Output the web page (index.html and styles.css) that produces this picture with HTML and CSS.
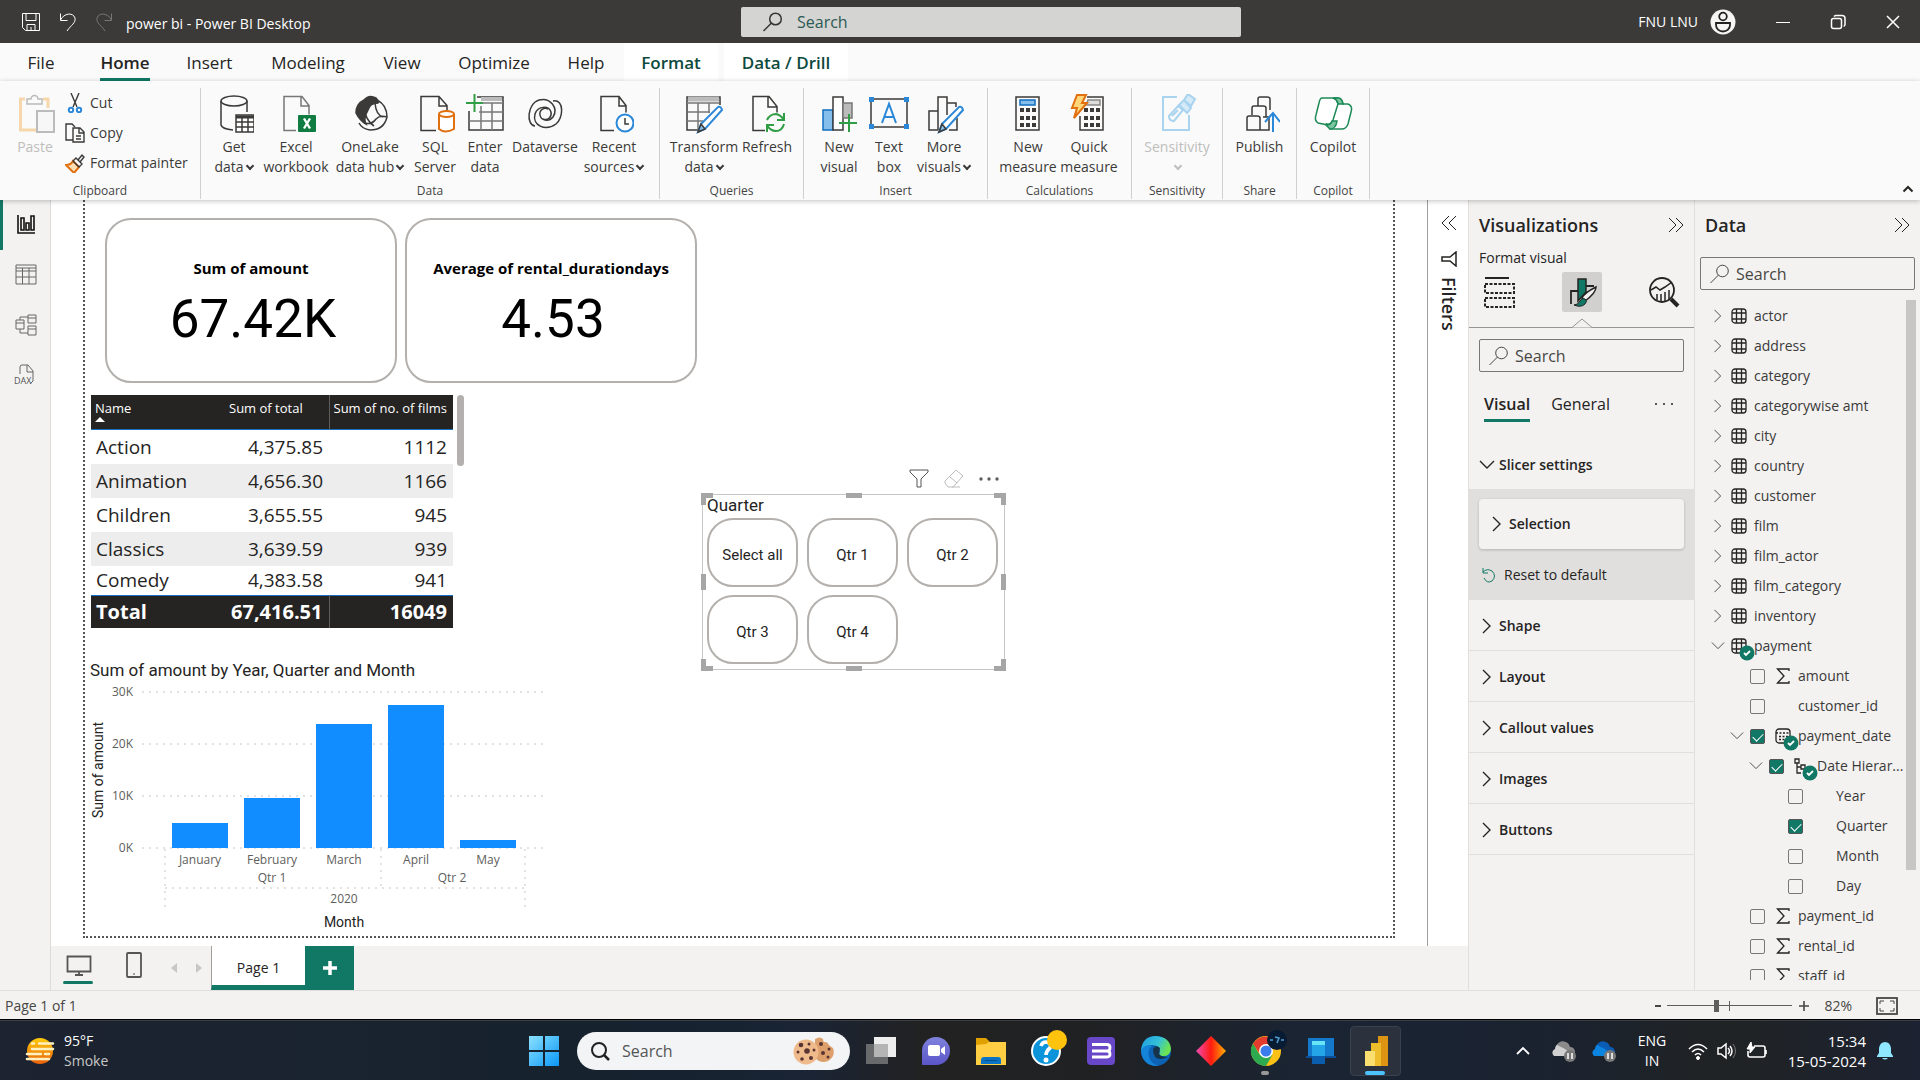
FILE: index.html
```html
<!DOCTYPE html>
<html lang="en">
<head>
<meta charset="utf-8">
<title>power bi - Power BI Desktop</title>
<link rel="stylesheet" href="styles.css">
</head>
<body>
<svg class="defs" aria-hidden="true">
  <symbol id="search" viewBox="0 0 20 20"><circle cx="12.500" cy="7" r="5.800"/><path d="M8.500 11 .5 19"/></symbol>
  <symbol id="right" viewBox="0 0 16 16"><path d="M4 1l7 7-7 7"/></symbol>
  <symbol id="down" viewBox="0 0 16 16"><path d="M1 4l7 7 7-7"/></symbol>
  <symbol id="double" viewBox="0 0 16 16"><path d="M1 1l7 7-7 7M8 1l7 7-7 7"/></symbol>
  <symbol id="table" viewBox="0 0 16 16"><rect x="1" y="1" width="14" height="14" rx="3"/><path d="M1 5h14M1 11h14M5.500 1v14M10.500 1v14"/></symbol>
  <symbol id="sigma" viewBox="0 0 14 16"><path d="M13 3V1H1.500L8 8l-6.500 7H13v-2"/></symbol>
  <symbol id="badge" viewBox="0 0 16 16"><circle cx="8" cy="8" r="7.500" fill="#117865" stroke="none"/><path d="M5 8l2 2 4-4" stroke="#fff" stroke-width="1.800"/></symbol>
  <symbol id="cloud" viewBox="0 0 34 30"><path d="M7 13a6 6 0 0 1 11-3l3 10H6a4 4 0 0 1 1-7z" fill="var(--a)"/><path d="M9 9a7 7 0 0 1 13 2 5 5 0 0 1 3 9l-8-7z" fill="var(--b)"/><circle cx="22" cy="20" r="6" fill="#777"/><path d="M20 17v6M24 17v6" stroke="#fff" stroke-width="1.500"/></symbol>
</svg>

<header class="titlebar">
  <div class="title-left">
    <button class="plain" aria-label="Save"><svg width="20" height="20" viewBox="0 0 20 20"><path d="M1.500 1.500h17v17h-14l-3-3zM5 1.500v7h10v-7M6 18.500v-6h8v6M10 15v3"/></svg></button>
    <button class="plain" aria-label="Undo"><svg width="18" height="20" viewBox="0 0 18 20"><path d="M1.500 1.500v7h7M1.500 8C5 1 14 0 16 6c1 5-4 7-8 13"/></svg></button>
    <button class="plain dim" aria-label="Redo"><svg width="18" height="20" viewBox="0 0 18 20"><path d="M16.500 1.500v7h-7M16.500 8C13 1 4 0 2 6c-1 5 4 7 8 13"/></svg></button>
    <span class="doc">power bi - Power BI Desktop</span>
  </div>
  <label class="title-search"><svg width="20" height="20"><use href="#search"/></svg><input type="text" placeholder="Search" aria-label="Search"></label>
  <div class="title-right">
    <span>FNU LNU</span>
    <svg class="avatar" width="26" height="26" viewBox="0 0 26 26"><circle cx="13" cy="13" r="12.500" fill="#f6f5f4" stroke="none"/><g stroke="#222" stroke-width="1.800"><circle cx="13" cy="7.500" r="3.800"/><path d="M6 14h14v2a7 6.500 0 0 1-14 0z"/></g></svg>
    <button class="plain win" aria-label="Minimize"><svg width="16" height="16" viewBox="0 0 16 16"><path d="M1 8.500h14"/></svg></button>
    <button class="plain win" aria-label="Restore"><svg width="16" height="16" viewBox="0 0 16 16"><rect x="1.500" y="4.500" width="10" height="10" rx="2" stroke-width="1.500"/><path d="M4 2.500q1-1 2-1h6q3 0 3 3v6l-1 2" stroke-width="1.500"/></svg></button>
    <button class="plain win" aria-label="Close"><svg width="16" height="16" viewBox="0 0 16 16"><path d="M2 2l12 12M14 2L2 14" stroke-width="1.500"/></svg></button>
  </div>
</header>

<nav class="tabs">
  <button class="w72"><span>File</span></button>
  <button class="w96 active"><span>Home</span></button>
  <button class="w73"><span>Insert</span></button>
  <button class="w124"><span>Modeling</span></button>
  <button class="w64"><span>View</span></button>
  <button class="w120"><span>Optimize</span></button>
  <button class="w64"><span>Help</span></button>
  <button class="w94 context"><span>Format</span></button>
  <button class="w124 context"><span>Data / Drill</span></button>
</nav>

<section class="ribbon">
  <div class="group clip">
    <div class="tools">
      <button class="tool w50 off"><svg viewBox="-4 0 40 40"><path d="M6 5H1.500v31H18M24 5h5v9" stroke="#f6d7ab" stroke-width="3"/><path d="M8 10V5h4a3.500 3.500 0 0 1 7 0h4v5z" fill="#fafafa" stroke="#bbb"/><rect x="18" y="17" width="17" height="21" fill="#f7f7f7" stroke="#bbb" stroke-width="2"/></svg>Paste</button>
      <div class="minis">
        <button><svg viewBox="0 0 20 20"><path d="M6 0l6 14M14 0L8 14"/><g stroke="#2b88d8" stroke-width="2"><circle cx="6" cy="17" r="2.200"/><circle cx="14" cy="17" r="2.200"/></g></svg>Cut</button>
        <button><svg viewBox="0 0 20 20"><path d="M8 17H1V1h6l3 3"/><path d="M8 5h7l4 4v10H8zM14 5v5h5M11 13h5M11 16h5"/></svg>Copy</button>
        <button><svg viewBox="0 0 20 20"><path d="M1 12c4 0 6-2 7-4l6 6-5 6z" fill="#fbe0b5" stroke="#e07010" stroke-width="2"/><path d="M8 8l3-3 6 6-3 3zM13 7l4-5 2 2-4 5"/></svg>Format painter</button>
      </div>
    </div>
    <h2>Clipboard</h2>
  </div>
  <div class="group data">
    <div class="tools">
      <button class="tool w50"><svg viewBox="0 0 40 40"><ellipse cx="20" cy="7" rx="13" ry="5"/><path d="M7 7v24q1 4 12 5M33 7v11"/><rect x="22" y="21" width="18" height="17" fill="#fff"/><path d="M22 23h18" stroke-width="3"/><path d="M22 28h18M22 33h18M28 24v14M34 24v14"/></svg>Get<br>data<i></i></button>
      <button class="tool w74"><svg viewBox="0 0 40 40"><path d="M20 36.500H8V2.500h18l7 9v9M25 3v9h8" stroke="#777"/><rect x="22" y="21" width="18" height="17" rx="1" fill="#107c41" stroke="none"/><path d="M28 24.500l6 10M34 24.500l-6 10" stroke="#fff" stroke-width="2.400"/></svg>Excel<br>workbook</button>
      <button class="tool w74"><svg viewBox="0 0 40 40"><path d="M14 6q5-6 12-2 3 3 2 5-8 0-10 7-5 8-2 14-6-3-10-11 0-9 8-13z" fill="#3b3a39"/><path d="M27 6q10 5 10 17-3 13-17 13-8-1-11-7M13 12q3 15 11 20M25 9q1 12 8 14M14 29q8 2 12-4 4-4 11-2"/></svg>OneLake<br>data hub<i></i></button>
      <button class="tool w56"><svg viewBox="0 0 40 40"><path d="M21 36.500H6V2.500h18l8 9v5M24 3v9h8"/><g stroke="#e07010" stroke-width="2" fill="#fff"><path d="M24 20v15q6 5 15 0V20"/><ellipse cx="31.500" cy="20" rx="7.500" ry="3"/></g></svg>SQL<br>Server</button>
      <button class="tool w44"><svg viewBox="0 0 40 40"><path d="M12 3h26v33H4V17"/><path d="M16 5h21" stroke="#bbb" stroke-width="4"/><path d="M14 9h24M14 18h24M4 27h34M16 12v24M27 9v27" stroke="#777"/><path d="M9.500 0v18M1 9h17" stroke="#2f9e44" stroke-width="2"/></svg>Enter<br>data</button>
      <button class="tool w76"><svg viewBox="0 0 40 40"><path d="M10 32c-9-1-8-22 4-26 11-3 20 8 14 17-4 5-12 4-13-2-1-5 4-8 8-6"/><path d="M28 7c12-2 10 18 3 23-11 8-24 1-21-10 3-9 14-8 16-2 1 5-3 9-8 7"/></svg>Dataverse</button>
      <button class="tool w62"><svg viewBox="0 0 40 40"><path d="M20 36.500H7V2.500h18l7 9v7M25 3v9h7"/><circle cx="31" cy="29" r="8.500" fill="#fff" stroke="#2b88d8" stroke-width="2"/><path d="M31 24v6h4"/></svg>Recent<br>sources<i></i></button>
    </div>
    <h2>Data</h2>
  </div>
  <div class="group queries">
    <div class="tools">
      <button class="tool w72"><svg viewBox="0 0 40 40"><path d="M16 36H3V3h33v8"/><path d="M4 5h31" stroke="#bbb" stroke-width="5"/><path d="M3 9h32M3 18h23M3 27h16M14 9v27M25 9v10" stroke="#777"/><path d="M14 38l3-8 17-17q3-1 4 3L21 35z" fill="#fff" stroke="#2b88d8" stroke-width="2"/><path d="M14 38l3-8 4 5z" fill="#83beec"/></svg>Transform<br>data<i></i></button>
      <button class="tool w54"><svg viewBox="0 0 40 40"><path d="M18 36.500H6V2.500h16l8 10v6M21 3v10h9"/><path d="M37 19v7h-7M20 26q3-6 9-6 5 1 8 6M20 38v-7h7M37 30q-2 7-8 7-6 0-9-6" stroke="#2f9e44" stroke-width="2"/></svg>Refresh</button>
    </div>
    <h2>Queries</h2>
  </div>
  <div class="group insert">
    <div class="tools">
      <button class="tool w50"><svg viewBox="0 0 40 40"><rect x="4" y="16" width="10" height="20" fill="#83beec" stroke="#106ebe"/><rect x="14" y="3" width="10" height="33" fill="#fff"/><path d="M24 9h9v15H24z" fill="#bbb" stroke="#777"/><path d="M30 20v18M20 29h18" stroke="#2f9e44" stroke-width="2"/></svg>New<br>visual</button>
      <button class="tool w50"><svg viewBox="0 0 40 40"><rect x="2" y="5" width="36" height="28"/><path d="M13 29l7-19 7 19M15 23h10" stroke="#2b88d8" stroke-width="2"/><g fill="#2b88d8" stroke="none"><path d="M0 3h5v5H0zM35 3h5v5h-5zM0 30h5v5H0zM35 30h5v5h-5z"/></g></svg>Text<br>box</button>
      <button class="tool w60"><svg viewBox="0 0 40 40"><path d="M14 36H5V17h9M14 36V3h9v18M23 9h9v4M33 24v12h-8"/><path d="M15 38l3-8 17-17q3-1 4 3L22 35z" fill="#fff" stroke="#2b88d8" stroke-width="2"/><path d="M15 38l3-8 4 5z" fill="#83beec"/></svg>More<br>visuals<i></i></button>
    </div>
    <h2>Insert</h2>
  </div>
  <div class="group insert">
    <div class="tools">
      <button class="tool w60"><svg viewBox="0 0 40 40"><rect x="8" y="3" width="23" height="33"/><rect x="12" y="6" width="15" height="5" fill="#83beec" stroke="#106ebe"/><path d="M12 16h17M12 24h17M12 31h17" stroke-width="4" stroke-dasharray="4 2"/></svg>New<br>measure</button>
      <button class="tool w62"><svg viewBox="0 0 40 40"><path d="M18 3h16v33H11V22"/><path d="M19 6h12v5H17z" fill="#ddd" stroke="#888"/><path d="M15 16h17M15 24h17M15 31h17" stroke-width="4" stroke-dasharray="4 2"/><path d="M8 1h9l-4 8h5L5 24l3-10H3z" fill="#ffd77a" stroke="#e07010" stroke-width="2"/></svg>Quick<br>measure</button>
    </div>
    <h2>Calculations</h2>
  </div>
  <div class="group w91">
    <div class="tools center">
      <button class="tool w76 off"><svg viewBox="0 0 40 40"><g stroke="#a9d3ee" stroke-width="2"><path d="M20 3H6v33h26V21"/><path d="M12 22l9-10 5 4-9 11q-5 0-5-5zM15 22l6-6"/><path d="M22 11l8 8 4-5-7-8zM27 6l4-6 7 5-4 7z" fill="#d4eaf8"/></g></svg>Sensitivity<br><i></i></button>
    </div>
    <h2>Sensitivity</h2>
  </div>
  <div class="group w74">
    <div class="tools center">
      <button class="tool w62"><svg viewBox="0 0 40 40"><path d="M20 36H7V24q0-2 2-2h8q3 0 3 2zM12 21v-7q0-2 2-2h9q3 0 3 2v9M18 12V5q0-2 2-2h7q3 0 3 2v11M20 36h9V23h-6"/><path d="M33 38V19M25 28l8-9 7 9" stroke="#2b88d8" stroke-width="2"/></svg>Publish</button>
    </div>
    <h2>Share</h2>
  </div>
  <div class="group w73">
    <div class="tools center">
      <button class="tool w62"><svg viewBox="0 0 40 40"><g stroke="#1d8a57" fill="#fff"><path d="M9 4h14q5 1 4 8l-5 17q-2 4-7 2l-10-2q-4-3-2-8l3-12q1-5 3-5z"/><path d="M20 4h5q4 0 5 6h5q5 2 3 8l-3 12q-2 5-6 5H17l-3-5q4 1 6-4l5-16q-1-5-5-6z"/><path d="M20 4h5q4 0 5 6h-5q-1-5-5-6zM13 31q5 0 6-4h5q-1 8-7 8z" fill="#7cc5a0"/></g></svg>Copilot</button>
    </div>
    <h2>Copilot</h2>
  </div>
  <button class="collapse plain" aria-label="Collapse ribbon"><svg width="12" height="12" viewBox="0 0 12 12"><path d="M1.500 8.500L6 4l4.500 4.500" stroke-width="2"/></svg></button>
</section>

<main class="main">
  <nav class="rail">
    <button class="on" aria-label="Report view"><svg viewBox="0 0 22 22"><path d="M3 1v18h17M6 16V4h3v12zM11 16V9h3v7zM16 16V2h3v14z" stroke-width="1.600"/></svg></button>
    <button aria-label="Table view"><svg viewBox="0 0 22 22"><path d="M1 1h20v19H1zM1 7h20M1 13h20M7.500 4v16M14 4v16M1 4h20"/></svg></button>
    <button aria-label="Model view"><svg viewBox="0 0 22 22"><path d="M1 6h8v9H1zM1 9h8M13 1h8v8h-8zM13 4h8M13 12h8v9h-8zM13 15h8M5 6V3h8M5 15v4h8"/></svg></button>
    <button aria-label="DAX query view"><svg viewBox="0 0 22 22"><path d="M5 10V3q0-2 2-2h6l5 6v10l-3 3M12 1v7h6"/><text x="-1" y="20">DAX</text></svg></button>
  </nav>

  <div class="center-col">
    <div class="work">
      <div class="canvas">
        <div class="report">
          <article class="card c1"><h3>Sum of amount</h3><p>67.42K</p></article>
          <article class="card c2"><h3>Average of rental_durationdays</h3><p>4.53</p></article>

          <div class="matrix">
            <table>
              <thead><tr><th>Name<b></b></th><th>Sum of total</th><th>Sum of no. of films</th></tr></thead>
              <tbody>
                <tr><td>Action</td><td>4,375.85</td><td>1112</td></tr>
                <tr><td>Animation</td><td>4,656.30</td><td>1166</td></tr>
                <tr><td>Children</td><td>3,655.55</td><td>945</td></tr>
                <tr><td>Classics</td><td>3,639.59</td><td>939</td></tr>
                <tr class="cut"><td>Comedy</td><td>4,383.58</td><td>941</td></tr>
              </tbody>
              <tfoot><tr><td>Total</td><td>67,416.51</td><td>16049</td></tr></tfoot>
            </table>
            <div class="matrix-bar"></div>
          </div>

          <figure class="chart">
            <figcaption>Sum of amount by Year, Quarter and Month</figcaption>
            <svg width="460" height="250" viewBox="0 0 460 250">
              <g class="grid"><path d="M52 12h402M52 64h402M52 116h402M52 168h402M75 169v61M291 169v39M435 169v61M75 208h360"/></g>
              <g fill="#118dff" stroke="none"><path d="M82 143h56v25H82zM154 118h56v50h-56zM226 44h56v124h-56zM298 25h56v143h-56zM370 160h56v8h-56z"/></g>
              <g class="axis" text-anchor="end"><text x="43" y="16">30K</text><text x="43" y="68">20K</text><text x="43" y="120">10K</text><text x="43" y="172">0K</text></g>
              <g class="axis" text-anchor="middle"><text x="110" y="184">January</text><text x="182" y="184">February</text><text x="254" y="184">March</text><text x="326" y="184">April</text><text x="398" y="184">May</text><text x="182" y="202">Qtr 1</text><text x="362" y="202">Qtr 2</text><text x="254" y="223">2020</text></g>
              <g class="axis-title" text-anchor="middle"><text x="254" y="247">Month</text><text transform="translate(13 90) rotate(-90)">Sum of amount</text></g>
            </svg>
          </figure>

          <section class="slicer">
            <div class="slicer-tools">
              <svg width="20" height="20" viewBox="0 0 20 20"><path d="M1 1h18v2l-7 7v8H8v-8L1 3z" stroke="#555"/></svg>
              <svg width="20" height="20" viewBox="0 0 20 20"><path d="M1 12L12 1l7 6-10 11H4l-3-4zM6 8l7 6M8 18h8" stroke="#bbb"/></svg>
              <svg width="20" height="20" viewBox="0 0 20 20"><g fill="#605e5c" stroke="none"><circle cx="2" cy="10" r="1.700"/><circle cx="10" cy="10" r="1.700"/><circle cx="18" cy="10" r="1.700"/></g></svg>
            </div>
            <h3>Quarter</h3>
            <div class="tiles"><button>Select all</button><button>Qtr 1</button><button>Qtr 2</button><button>Qtr 3</button><button>Qtr 4</button></div>
            <i class="h tl"></i><i class="h tr"></i><i class="h bl"></i><i class="h br"></i>
            <i class="m top"></i><i class="m bottom"></i><i class="m left"></i><i class="m right"></i>
          </section>
        </div>
      </div>
      <aside class="filters">
        <button class="plain flip" aria-label="Expand filters"><svg width="16" height="16"><use href="#double"/></svg></button>
        <svg width="16" height="16" viewBox="0 0 16 16"><path d="M15 1v14L9 10H1V6h8z" stroke-width="1.500"/></svg>
        <span>Filters</span>
      </aside>
    </div>
    <div class="pages">
      <button class="view on" aria-label="Desktop layout"><svg width="26" height="24" viewBox="0 0 26 24"><path d="M1.500 3.500h23v15h-23zM13 19v3M9 22h8" stroke-width="1.800"/></svg></button>
      <button class="view" aria-label="Mobile layout"><svg width="18" height="28" viewBox="0 0 18 28"><rect x="2" y="2" width="14" height="24" rx="1" stroke-width="1.800"/><path d="M8 23h2"/></svg></button>
      <button class="arrow" aria-label="Previous page"><svg width="8" height="12"><path d="M7 1v10L1 6z"/></svg></button>
      <button class="arrow" aria-label="Next page"><svg width="8" height="12"><path d="M1 1v10l6-5z"/></svg></button>
      <button class="page">Page 1</button>
      <button class="add" aria-label="New page"><svg width="16" height="16" viewBox="0 0 16 16"><path d="M8 1v14M1 8h14" stroke="#fff" stroke-width="3.500"/></svg></button>
    </div>
  </div>

  <aside class="pane viz">
    <div class="pane-head"><h2>Visualizations</h2><button class="plain" aria-label="Collapse"><svg width="16" height="16"><use href="#double"/></svg></button></div>
    <p class="sub">Format visual</p>
    <div class="modes">
      <button aria-label="Build visual"><svg width="32" height="32" viewBox="0 0 32 32"><path d="M2 2h24" stroke-width="2"/><path d="M2 8h29v9H2zM2 22h29v9H2z" stroke-width="2" stroke-dasharray="3 1.500"/></svg></button>
      <button class="on" aria-label="Format visual"><svg width="32" height="32" viewBox="0 0 32 32"><path d="M5 28V15h7M20 10h8" stroke-width="1.800"/><path d="M12 3h8v13l-8 9z" fill="#117865" stroke-width="1.500"/><path d="M16 22q2-5 14-11 0 6-11 14z" fill="#f3f2f1" stroke-width="1.500"/><path d="M8 29q4 0 6-4 2-4 5-2 3 2 0 5-4 4-11 1z" fill="#117865"/></svg></button>
      <button aria-label="Analytics"><svg width="32" height="32" viewBox="0 0 32 32"><circle cx="14" cy="14" r="12" stroke-width="1.800"/><path d="M3 14l5-3 4 3 5-3 7-5M9 24v-6M13 26v-8M17 25v-9M21 23v-9" stroke-width="1.500"/><path d="M23 23l7 7" stroke-width="4"/></svg></button>
    </div>
    <svg class="notch" width="20" height="10" viewBox="0 0 20 10"><path d="M0 9.500L10 1l10 8.500" fill="#f3f2f1" stroke="#979593"/></svg>
    <label class="find"><svg width="20" height="20"><use href="#search"/></svg><input type="text" placeholder="Search" aria-label="Search format options"></label>
    <div class="subtabs"><button class="on">Visual</button><button>General</button><button class="dots" aria-label="More options"><svg width="20" height="4"><g fill="#252423" stroke="none"><circle cx="2" cy="2" r="1"/><circle cx="10" cy="2" r="1"/><circle cx="18" cy="2" r="1"/></g></svg></button></div>
    <button class="sect open"><svg width="16" height="16"><use href="#down"/></svg>Slicer settings</button>
    <div class="inner">
      <button class="selection"><svg width="16" height="16"><use href="#right"/></svg>Selection</button>
      <button class="reset"><svg width="16" height="16" viewBox="0 0 16 16"><path d="M2 1v5h5M2 5q4-4 9-1 5 5 0 10-5 3-8-3" stroke="#117865"/></svg>Reset to default</button>
    </div>
    <button class="sect"><svg width="16" height="16"><use href="#right"/></svg>Shape</button>
    <button class="sect"><svg width="16" height="16"><use href="#right"/></svg>Layout</button>
    <button class="sect"><svg width="16" height="16"><use href="#right"/></svg>Callout values</button>
    <button class="sect"><svg width="16" height="16"><use href="#right"/></svg>Images</button>
    <button class="sect"><svg width="16" height="16"><use href="#right"/></svg>Buttons</button>
  </aside>

  <aside class="pane fields">
    <div class="pane-head"><h2>Data</h2><button class="plain" aria-label="Collapse"><svg width="16" height="16"><use href="#double"/></svg></button></div>
    <label class="find"><svg width="20" height="20"><use href="#search"/></svg><input type="text" placeholder="Search" aria-label="Search fields"></label>
    <div class="tree">
      <div class="rows">
        <button class="row"><svg class="chev"><use href="#right"/></svg><svg class="ico"><use href="#table"/></svg>actor</button>
        <button class="row"><svg class="chev"><use href="#right"/></svg><svg class="ico"><use href="#table"/></svg>address</button>
        <button class="row"><svg class="chev"><use href="#right"/></svg><svg class="ico"><use href="#table"/></svg>category</button>
        <button class="row"><svg class="chev"><use href="#right"/></svg><svg class="ico"><use href="#table"/></svg>categorywise amt</button>
        <button class="row"><svg class="chev"><use href="#right"/></svg><svg class="ico"><use href="#table"/></svg>city</button>
        <button class="row"><svg class="chev"><use href="#right"/></svg><svg class="ico"><use href="#table"/></svg>country</button>
        <button class="row"><svg class="chev"><use href="#right"/></svg><svg class="ico"><use href="#table"/></svg>customer</button>
        <button class="row"><svg class="chev"><use href="#right"/></svg><svg class="ico"><use href="#table"/></svg>film</button>
        <button class="row"><svg class="chev"><use href="#right"/></svg><svg class="ico"><use href="#table"/></svg>film_actor</button>
        <button class="row"><svg class="chev"><use href="#right"/></svg><svg class="ico"><use href="#table"/></svg>film_category</button>
        <button class="row"><svg class="chev"><use href="#right"/></svg><svg class="ico"><use href="#table"/></svg>inventory</button>
        <button class="row"><svg class="chev"><use href="#down"/></svg><span class="ico"><svg class="ico"><use href="#table"/></svg><svg class="mark"><use href="#badge"/></svg></span>payment</button>
        <label class="row l1"><input type="checkbox"><svg class="ico"><use href="#sigma"/></svg>amount</label>
        <label class="row l1"><input type="checkbox"><span class="ico"></span>customer_id</label>
        <label class="row l1 exp"><svg class="chev"><use href="#down"/></svg><input type="checkbox" checked><span class="ico"><svg class="ico" viewBox="0 0 16 16"><rect x="1" y="1" width="14" height="14" rx="3"/><path d="M1 5h14M4 8.500h9M4 11.500h9" stroke-dasharray="2 1.500"/></svg><svg class="mark"><use href="#badge"/></svg></span>payment_date</label>
        <label class="row l2 exp"><svg class="chev"><use href="#down"/></svg><input type="checkbox" checked><span class="ico"><svg class="ico" viewBox="0 0 16 16"><path d="M1 1h4v4H1zM7 7h4v4H7zM3 5v10h4M3 9h4"/></svg><svg class="mark"><use href="#badge"/></svg></span>Date Hierar...</label>
        <label class="row l3"><input type="checkbox"><span class="ico"></span>Year</label>
        <label class="row l3"><input type="checkbox" checked><span class="ico"></span>Quarter</label>
        <label class="row l3"><input type="checkbox"><span class="ico"></span>Month</label>
        <label class="row l3"><input type="checkbox"><span class="ico"></span>Day</label>
        <label class="row l1"><input type="checkbox"><svg class="ico"><use href="#sigma"/></svg>payment_id</label>
        <label class="row l1"><input type="checkbox"><svg class="ico"><use href="#sigma"/></svg>rental_id</label>
        <label class="row l1"><input type="checkbox"><svg class="ico"><use href="#sigma"/></svg>staff_id</label>
      </div>
      <div class="track"></div>
    </div>
  </aside>
</main>

<footer class="status">
  <span>Page 1 of 1</span>
  <div class="zoom">
    <button class="plain" aria-label="Zoom out"><svg width="12" height="12"><path d="M3 6h6" stroke-width="2"/></svg></button>
    <input type="range" min="0" max="100" value="39" aria-label="Zoom">
    <button class="plain" aria-label="Zoom in"><svg width="12" height="12"><path d="M1 6h10M6 1v10" stroke-width="1.600"/></svg></button>
    <output>82%</output>
    <button class="plain" aria-label="Fit to page"><svg width="22" height="18" viewBox="0 0 22 18"><rect x="1" y="1" width="20" height="16" stroke-width="1.800"/><path d="M4 7V4h4M14 4h4v3M18 11v3h-4M8 14H4v-3"/></svg></button>
  </div>
</footer>

<div class="taskbar">
  <svg class="defs" aria-hidden="true"><defs>
    <linearGradient id="gsun" x1="0" y1="0" x2="0" y2="1"><stop stop-color="#ffcb0a"/><stop offset="1" stop-color="#e8600b"/></linearGradient>
    <linearGradient id="gwin" x1="0" y1="0" x2="1" y2="1"><stop stop-color="#8be1ff"/><stop offset="1" stop-color="#0a97f7"/></linearGradient>
    <linearGradient id="gchat" x1="0" y1="0" x2="0" y2="1"><stop stop-color="#7f82dd"/><stop offset="1" stop-color="#5b55c8"/></linearGradient>
    <linearGradient id="gdia"><stop stop-color="#f04bb4"/><stop offset=".5" stop-color="#ff1b10"/><stop offset="1" stop-color="#ffb000"/></linearGradient>
    <linearGradient id="gedge" x1="0" y1="0" x2="1" y2=".4"><stop stop-color="#1c9ae0"/><stop offset=".6" stop-color="#35c1d8"/><stop offset="1" stop-color="#6be352"/></linearGradient>
  </defs></svg>
  <div class="weather">
    <svg width="30" height="28" viewBox="0 0 30 28"><circle cx="15" cy="14" r="13" fill="url(#gsun)" stroke="none"/><g stroke="#fff0c0" stroke-width="2.500" stroke-linecap="round"><path d="M7 6.500h2M14 6.500h14M7 12h21M2 17h14M20 17h4M2 22h22"/></g></svg>
    <div><span>95°F</span><em>Smoke</em></div>
  </div>
  <button class="app" aria-label="Start"><svg viewBox="0 0 30 30"><path d="M0 0h14v14H0zM16 0h14v14H16zM0 16h14v14H0zM16 16h14v14H16z" fill="url(#gwin)"/></svg></button>
  <label class="task-search"><svg width="20" height="20" viewBox="0 0 20 20"><circle cx="9" cy="9" r="7" stroke-width="2"/><path d="M14 14l5 5" stroke-width="2.500"/></svg><input type="text" placeholder="Search" aria-label="Search Windows"><svg width="42" height="28" viewBox="0 0 42 28"><path d="M22 2q5-3 8 0 0 4 4 3 1 3 6 6 3 8-5 13-7 3-13-3z" fill="#dda06c"/><circle cx="13" cy="15" r="12.500" fill="#f0bb8c"/><g fill="#5a3432"><circle cx="8" cy="8" r="2.300"/><circle cx="16" cy="7" r="1.500"/><circle cx="14" cy="14" r="2.800"/><circle cx="5" cy="15" r="1.500"/><circle cx="9" cy="22" r="1.800"/><circle cx="18" cy="21" r="2"/><circle cx="21" cy="13" r="1.500"/><circle cx="28" cy="7" r="2"/><circle cx="30" cy="16" r="2"/><circle cx="36" cy="12" r="1.500"/><circle cx="35" cy="20" r="1.500"/></g></svg></label>
  <button class="app" aria-label="Task view"><svg viewBox="0 0 30 30"><path d="M8 1h22v20H8z" fill="#eee"/><path d="M0 8h22v20H0z" fill="#777" opacity=".85"/><path d="M8 8h14v13H8z" fill="#b5b5b5"/></svg></button>
  <button class="app" aria-label="Chat"><svg viewBox="0 0 30 30"><path d="M1 29V15A14 14 0 1 1 15 29z" fill="url(#gchat)"/><rect x="7" y="9" width="12" height="11" rx="2" fill="#fff"/><path d="M20 13l4-3v9l-4-3z" fill="#fff"/></svg></button>
  <button class="app" aria-label="File Explorer"><svg viewBox="0 0 30 30"><path d="M0 2h10l4 4v6H0z" fill="#dfa000"/><path d="M0 9l10-1 3-2h17v23H0z" fill="#ffce43"/><path d="M5 28v-4q0-3 3-3h14q3 0 3 3v4z" fill="#0a73c4"/><path d="M9 24.500h12" stroke="#064f8c"/></svg></button>
  <button class="app" aria-label="Get Help"><svg viewBox="0 0 30 30"><circle cx="15" cy="15" r="14" fill="#0b94da" stroke="#fff" stroke-width="2"/><path d="M10 10q1-4 5-4 6 1 4 6-4 3-4 7" stroke="#fff" stroke-width="3.500"/><circle cx="15" cy="24" r="2.500" fill="#fff"/><circle cx="26" cy="4" r="10" fill="#ffc20d"/></svg></button>
  <button class="app" aria-label="Bing"><svg viewBox="0 0 30 30"><rect x="1" y="1" width="28" height="28" rx="4" fill="#6848c8"/><path d="M6 8.500h15q3 0 3 3.200T21 15H6M21 15q3 0 3 3t-3 3H6" stroke="#fff" stroke-width="2.800"/></svg></button>
  <button class="app" aria-label="Edge"><svg viewBox="0 0 30 30"><circle cx="15" cy="15" r="15" fill="#0c62b5"/><path d="M0 15Q1 0 15 0q14 1 15 13-1 8-9 7-4-1-2-4 0-7-8-7Q3 9 0 15z" fill="url(#gedge)"/><path d="M0 15q3-7 11-5-5 4-3 11 2 7 10 9-16 1-18-15z" fill="#1484d8"/><path d="M12 13q3-5 7-1l-1 5q0 4 9 4l-6 2q-9 1-9-10z" fill="#17334a"/></svg></button>
  <button class="app" aria-label="Diamond"><svg viewBox="0 0 30 30"><path d="M15 0l15 15-15 15L0 15z" fill="url(#gdia)"/></svg></button>
  <button class="app" aria-label="Chrome"><svg viewBox="0 0 30 30"><circle cx="15" cy="15" r="15" fill="#fbc116"/><path d="M2 8a15 15 0 0 1 26 0H15l-6 10z" fill="#e33b2e"/><path d="M2 7.500A15 15 0 0 0 15 30l6.500-11.500-13 0z" fill="#2da94f"/><circle cx="15" cy="15" r="7" fill="#fff"/><circle cx="15" cy="15" r="5.500" fill="#3a7cec"/><circle cx="26" cy="4" r="10" fill="#071b33"/><path d="M19 4h3M30 4h3M24 1l4 1-2 5" stroke="#4f9fd6" stroke-width="1.500"/></svg><i class="run"></i></button>
  <button class="app" aria-label="Phone Link"><svg viewBox="0 0 30 30"><path d="M2 2h26v18H2z" fill="#1479ca"/><path d="M0 20h30v2H0z" fill="#0c4e96"/><rect x="6" y="5" width="13" height="23" fill="#24a5e8"/><path d="M6 5h13v4H6z" fill="#65e5f5"/><path d="M6 20h13v8H6z" fill="#0a5cad"/></svg></button>
  <button class="app on" aria-label="Power BI Desktop"><svg viewBox="0 0 30 30"><path d="M17 0h10v30H17z" fill="#dc9412"/><path d="M10 7h10v23H10z" fill="#edbd2c"/><path d="M4 15h10v15H4z" fill="#f8df70"/></svg><i class="run"></i></button>
  <div class="tray">
    <svg width="16" height="16" viewBox="0 0 16 16"><path d="M2 11l6-6 6 6" stroke-width="1.800"/></svg>
    <svg class="grey-cloud" width="34" height="30"><use href="#cloud"/></svg>
    <svg class="blue-cloud" width="34" height="30"><use href="#cloud"/></svg>
    <div class="lang">ENG<br>IN</div>
    <svg width="20" height="18" viewBox="0 0 20 18"><path d="M1 7q9-9 18 0M4 10q6-6 12 0M7 13q3-3 6 0" stroke-width="1.600"/><circle cx="10" cy="16" r="1.500" fill="#fff"/></svg>
    <svg width="20" height="18" viewBox="0 0 20 18"><path d="M1 6h3l5-4v14l-5-4H1zM11 6q3 3 0 6M13 4q4 5 0 10" stroke-width="1.500"/><path d="M16 2q5 7 0 14" stroke="#777"/></svg>
    <svg width="22" height="18" viewBox="0 0 22 18"><path d="M8 4h9q2 0 2 2v7q0 2-2 2H4q-2 0-2-2V9M20 8v4" stroke-width="1.600"/><path d="M5 0L1 7h3v4l5-6H6z" fill="#fff"/></svg>
    <div class="clock">15:34<br>15-05-2024</div>
    <svg class="bell" width="16" height="20" viewBox="0 0 16 20"><path d="M0 15l2-3V7q1-6 6-6t6 6v5l2 3v1H0zM5 17h6q-3 3-6 0z" fill="#8fe6ff" stroke="none"/></svg>
  </div>
</div>
</body>
</html>
```
FILE: styles.css
```css
* { box-sizing: border-box; }
html, body { height: 100%; }
body { margin: 0; display: flex; flex-direction: column; overflow: hidden; background: #f3f2f1; color: #252423; font: 14px/20px "Open Sans", "Noto Sans", sans-serif; }
button, input { font: inherit; color: inherit; }
button { margin: 0; padding: 0; border: 0; background: none; }
input[type="text"] { min-width: 0; flex: 1; padding: 0; border: 0; outline: 0; background: none; }
input::placeholder { color: inherit; opacity: 1; }
h2, h3, p, figure { margin: 0; }
svg { display: block; flex: none; fill: none; stroke: currentColor; }
.defs { position: absolute; width: 0; height: 0; }
.plain { display: flex; }

.titlebar { flex: none; height: 43px; display: grid; grid-template-columns: 741px minmax(200px, 500px) 1fr; align-items: center; background: #3b3a39; color: #fff; }
.title-left { display: flex; align-items: center; gap: 18px; padding-left: 21px; }
.dim { color: #777; }
.doc { margin-left: -5px; padding-top: 5px; }
.title-search { display: flex; align-items: center; height: 30px; padding-left: 22px; gap: 14px; border-radius: 2px; background: #d4d4d2; color: #2c5a53; font-size: 16px; }
.title-search svg { color: #333; stroke-width: 1.5; }
.title-right { display: flex; align-items: center; justify-content: flex-end; padding-right: 19px; }
.avatar { margin: 0 39px 0 12px; }
.win + .win { margin-left: 39px; }

.tabs { flex: none; height: 38px; display: flex; padding-left: 5px; background: #fafafa; font-size: 17px; }
.tabs button { display: flex; justify-content: center; }
.tabs span { padding-top: 10px; border-bottom: 3px solid transparent; line-height: 20px; height: 38px; }
.tabs .active { font-weight: 600; }
.tabs .active span { border-color: #117865; }
.tabs .context { margin-left: 6px; background: #fff; color: #0c4a3e; font-weight: 600; }
.w44 { width: 44px; } .w50 { width: 50px; } .w54 { width: 54px; } .w56 { width: 56px; } .w60 { width: 60px; } .w62 { width: 62px; } .w64 { width: 64px; }
.w72 { width: 72px; } .w73 { width: 73px; } .w74 { width: 74px; } .w76 { width: 76px; } .w91 { width: 91px; } .w94 { width: 94px; } .w96 { width: 96px; } .w120 { width: 120px; } .w124 { width: 124px; }

.ribbon { position: relative; z-index: 1; flex: none; height: 119px; display: flex; padding-top: 7px; background: #fafafa; box-shadow: 0 1px 5px rgba(0, 0, 0, .25); }
.group { display: flex; flex-direction: column; justify-content: space-between; border-right: 1px solid #d2d0ce; height: 111px; }
.group h2 { font-size: 12px; line-height: 16px; font-weight: 400; text-align: center; color: #444; }
.clip { width: 201px; } .data { width: 459px; } .queries { width: 144px; } .insert { width: 184px; }
.insert + .insert { width: 144px; }
.tools { display: flex; align-items: flex-start; padding-left: 8px; }
.clip .tools { padding-left: 10px; }
.center { justify-content: center; padding: 0; }
.insert .tools { padding-left: 10px; }
.tool { flex: none; display: block; padding-top: 6px; text-align: center; white-space: nowrap; color: #3b3a39; }
.tool svg { width: 40px; height: 40px; margin: 0 auto 3px; stroke-width: 1.5; }
.tool i { display: inline-block; width: 6px; height: 6px; margin: 0 1px 3px 3px; border: solid currentColor; border-width: 0 2px 2px 0; transform: rotate(45deg); }
.off { color: #c0bebc; }
.minis { padding-left: 5px; }
.minis button { display: flex; align-items: center; gap: 5px; height: 30px; color: #3b3a39; }
.minis svg { width: 20px; height: 20px; stroke-width: 1.4; }
.collapse { margin: auto 6px 5px auto; }

.main { flex: 1; min-height: 0; display: flex; }
.rail { flex: none; width: 51px; border-right: 1px solid #dddbd9; }
.rail button { width: 49px; height: 50px; display: flex; align-items: center; justify-content: center; border-left: 3px solid transparent; color: #666; }
.rail .on { border-color: #117865; color: #111; }
.rail svg { width: 22px; height: 22px; overflow: visible; }
.rail text { font-size: 9px; fill: #555; stroke: none; }
.center-col { flex: 1; min-width: 0; display: flex; flex-direction: column; }
.work { flex: 1; min-height: 0; display: flex; }
.canvas { flex: 1; min-width: 0; padding: 0 32px 8px 32px; background: #fff; }
.report { position: relative; height: 100%; border: 2px dotted #555; border-top: 0; font-family: Roboto, "Open Sans", sans-serif; }
.card { position: absolute; top: 18px; width: 292px; height: 165px; padding-top: 38px; border: 2px solid #b3b0ad; border-radius: 26px; text-align: center; color: #000; }
.c1 { left: 20px; } .c2 { left: 320px; }
.card h3 { font: 700 15px/20px "Open Sans", sans-serif; }
.card p { padding: 11px 0 0 4px; font-size: 53px; line-height: 60px; }

.matrix { position: absolute; left: 6px; top: 195px; display: flex; gap: 4px; font-family: "Open Sans", sans-serif; }
table { width: 362px; table-layout: fixed; border-collapse: collapse; }
th, td { padding: 0 6px; text-align: right; }
th:first-child, td:first-child { text-align: left; width: 134px; }
th:nth-child(2), td:nth-child(2) { width: 104px; }
thead th { text-align: left; }
th { height: 34px; padding: 4px 0 0 4px; vertical-align: top; font-size: 13px; font-weight: 400; line-height: 18px; white-space: nowrap; }
td:first-child { padding-left: 5px; }
thead, tfoot { background: #252423; color: #fff; }
thead { border-bottom: 1px solid #1870c5; }
thead th:last-child, tfoot td:last-child { border-left: 1px solid #605e5c; }
th b { display: block; width: 0; border: 5px solid transparent; border-top: 0; border-bottom-color: #fff; }
tbody td { height: 34px; font-size: 19px; line-height: 34px; }
tbody tr:nth-child(even) { background: #ededed; }
tbody .cut td { height: 29px; line-height: 29px; }
tfoot { border-top: 1px solid #1870c5; }
tfoot td { height: 33px; font-size: 20px; line-height: 32px; font-weight: 700; }
.matrix-bar { width: 7px; height: 71px; border-radius: 4px; background: #b3b0ad; }

.chart { position: absolute; left: 5px; top: 460px; }
figcaption { line-height: 20px; font-size: 17px; }
.grid { stroke: #c8c6c4; stroke-dasharray: 2 5; }
.axis { font-family: "Open Sans", sans-serif; font-size: 12px; fill: #605e5c; stroke: none; }
.axis-title { font-size: 14px; fill: #252423; stroke: none; }

.slicer { position: absolute; left: 617px; top: 294px; width: 303px; height: 176px; padding: 0 4px; border: 1px solid #c8c6c4; }
.slicer h3 { font-size: 17px; line-height: 20px; font-weight: 400; }
.slicer-tools { position: absolute; right: 5px; top: -26px; display: flex; gap: 15px; }
.tiles { display: grid; grid-template-columns: repeat(3, 91px); gap: 8px 9px; margin-top: 3px; }
.tiles button { height: 69px; border: 2px solid #b3b0ad; border-radius: 26px; padding-top: 4px; font-size: 15px; }
.h, .m { position: absolute; border: 0 solid #a6a6a6; }
.h { width: 12px; height: 12px; }
.tl { left: -2px; top: -2px; border-width: 5px 0 0 5px; }
.tr { right: -2px; top: -2px; border-width: 5px 5px 0 0; }
.bl { left: -2px; bottom: -2px; border-width: 0 0 5px 5px; }
.br { right: -2px; bottom: -2px; border-width: 0 5px 5px 0; }
.m { background: #a6a6a6; }
.top, .bottom { left: 50%; width: 16px; height: 5px; margin-left: -8px; }
.left, .right { top: 50%; width: 5px; height: 16px; margin-top: -8px; }
.top { top: -2px; } .bottom { bottom: -2px; } .left { left: -2px; } .right { right: -2px; }

.filters { flex: none; width: 41px; display: flex; flex-direction: column; align-items: center; padding: 15px 0 0 2px; background: #fff; border-left: 1px solid #a19f9d; }
.flip { transform: scaleX(-1); margin-bottom: 20px; }
.filters span { margin-top: 10px; writing-mode: vertical-rl; font-size: 18px; font-weight: 600; }

.pages { flex: none; height: 44px; display: flex; }
.view { width: 55px; position: relative; display: flex; align-items: center; justify-content: center; padding-bottom: 6px; color: #555; }
.view.on::after { content: ""; position: absolute; left: 12px; bottom: 6px; width: 30px; height: 3px; border-radius: 2px; background: #117865; }
.arrow { width: 25px; display: flex; align-items: center; justify-content: center; }
.arrow svg { fill: #c8c6c4; stroke: none; }
.page { width: 94px; padding-top: 5px; border-left: 1px solid #a19f9d; border-bottom: 5px solid #117865; background: #fff; }
.add { width: 49px; display: flex; align-items: center; justify-content: center; background: #117865; }

.pane { flex: none; width: 226px; border-left: 1px solid #e1dfdd; display: flex; flex-direction: column; }
.pane-head { display: flex; justify-content: space-between; align-items: center; height: 30px; margin: 10px 10px 0 10px; }
.pane h2 { font-size: 18px; font-weight: 600; }
.sub { padding: 8px 0 4px 10px; }
.modes { display: flex; justify-content: space-between; align-items: center; height: 56px; padding: 0 10px 15px; border-bottom: 1px solid #979593; }
.modes button { width: 40px; height: 40px; display: flex; align-items: center; justify-content: center; }
.modes .on { background: #d2d0ce; border-radius: 2px; }
.notch { align-self: center; margin-top: -10px; }
.find { flex: none; display: flex; align-items: center; gap: 6px; height: 33px; margin: 11px 10px 0 10px; padding-left: 9px; border: 1px solid #797775; border-radius: 2px; font-size: 16px; color: #484644; }
.subtabs { display: flex; gap: 21px; padding: 16px 20px 0 15px; height: 51px; font-size: 16px; }
.subtabs button { height: 34px; border-bottom: 3px solid transparent; }
.subtabs .on { border-color: #117865; font-weight: 600; }
.subtabs .dots { margin-left: auto; }
.sect { flex: none; display: flex; align-items: center; gap: 4px; height: 51px; padding: 1px 0 0 10px; border-bottom: 1px solid #e1dfdd; font-weight: 600; }
.sect.open { height: 66px; padding-top: 18px; border: 0; }
.inner { height: 111px; padding: 10px 10px 0 10px; background: #e1dfdd; }
.selection { width: 100%; height: 50px; display: flex; align-items: center; gap: 4px; padding-left: 10px; border-radius: 4px; background: #f3f2f1; box-shadow: 0 1px 3px rgba(0, 0, 0, .2); font-weight: 600; }
.reset { display: flex; align-items: center; gap: 7px; height: 51px; padding-left: 2px; }
.sect svg, .selection svg { stroke-width: 1.4; }

.fields .find { margin: 17px 5px 0 5px; }
.tree { display: flex; justify-content: space-between; margin-top: 10px; padding-right: 4px; height: 680px; overflow: hidden; }
.rows { padding: 1px 0 0 16px; }
.row { display: flex; align-items: center; height: 30px; white-space: nowrap; color: #3b3a39; }
.chev { width: 14px; height: 14px; margin-right: 6px; }
.ico { position: relative; width: 16px; height: 16px; margin-right: 7px; flex: none; color: #252423; stroke-width: 1.3; }
.mark { position: absolute; left: 8px; top: 7px; width: 16px; height: 16px; }
.l1 { padding-left: 39px; } .l1.exp { padding-left: 19px; }
.l2.exp { padding-left: 38px; } .l3 { padding-left: 77px; }
.track { width: 10px; height: 570px; background: #c8c6c4; }
input[type="checkbox"] { appearance: none; position: relative; width: 15px; height: 15px; margin: 0 10px 0 0; border: 1px solid #797775; border-radius: 2px; }
input[type="checkbox"]:checked { background: #117865; border-color: #555; }
input[type="checkbox"]:checked::after { content: ""; position: absolute; left: 4px; top: 1px; width: 5px; height: 9px; border: solid #fff; border-width: 0 1px 1px 0; transform: rotate(45deg); }

.status { flex: none; height: 30px; display: flex; justify-content: space-between; align-items: center; padding: 2px 22px 0 5px; border-top: 1px solid #e1dfdd; border-bottom: 1px solid #000; color: #484644; }
.zoom { display: flex; align-items: center; }
input[type="range"] { appearance: none; width: 125px; height: 12px; margin: 0 6px 0 3px; background: linear-gradient(#605e5c, #605e5c) 62px 1px / 1px 10px no-repeat, linear-gradient(#605e5c, #605e5c) 0 5px / 100% 1px no-repeat; }
input[type="range"]::-webkit-slider-thumb { appearance: none; width: 5px; height: 12px; background: #605e5c; }
.zoom output { margin: 0 24px 0 14px; }

.taskbar { flex: none; height: 60px; display: flex; align-items: center; border-top: 1px solid #3a3f45; background: linear-gradient(90deg, #1d2330, #16222f 35%, #1a2435 42%, #222 48%, #202123 57%, #1a2433 68%, #1a2230 80%, #202324 90%, #1c2231); color: #fff; }
.weather { width: 516px; display: flex; align-items: center; gap: 9px; padding-left: 25px; }
.weather span, .weather em { display: block; font-style: normal; line-height: 20px; }
.weather em { color: #c8c8c8; }
.app { position: relative; flex: none; width: 55px; height: 50px; display: flex; align-items: center; justify-content: center; }
.app svg { width: 30px; height: 30px; overflow: visible; stroke: none; }
.app.on::before { content: ""; position: absolute; inset: 0 2px; border: 1px solid #39414c; border-radius: 4px; background: #2b323e; }
.app.on svg { position: relative; }
.run { position: absolute; bottom: 1px; left: 23px; width: 8px; height: 4px; border-radius: 2px; background: #999; }
.on .run { left: 17px; width: 20px; background: #4cc2ff; }
.task-search { width: 273px; height: 38px; display: flex; align-items: center; gap: 12px; margin: 0 3px 0 6px; padding: 0 15px 0 13px; border-radius: 19px; background: #f3f4f5; color: #555; font-size: 16px; }
.task-search svg:first-child { color: #222; }
.task-search svg:last-child { stroke: none; }
.tray { margin-left: auto; display: flex; align-items: center; padding-right: 27px; line-height: 20px; }
.grey-cloud { --a: #d0d0d0; --b: #8a8a8a; margin: 0 6px 0 17px; stroke: none; }
.blue-cloud { --a: #0b84e0; --b: #0b5cb5; stroke: none; }
.lang { width: 50px; margin: 0 11px 0 5px; text-align: center; }
.lang + svg, .lang + svg + svg { margin-right: 9px; }
.clock { width: 98px; text-align: right; font-size: 15px; }
.bell { margin-left: 11px; }
```
